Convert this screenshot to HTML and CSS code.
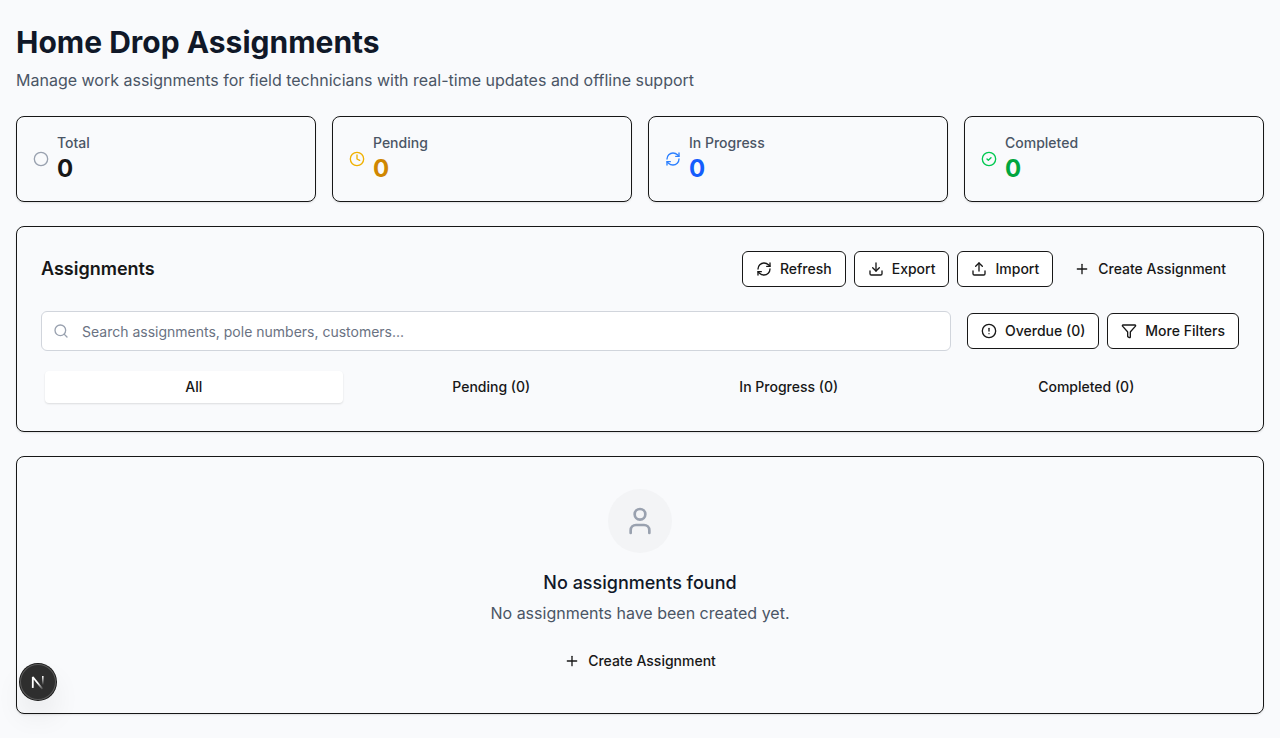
FILE: index.html
```html
<!DOCTYPE html>
<html lang="en">
<head>
<meta charset="utf-8">
<meta name="viewport" content="width=device-width, initial-scale=1">
<title>Home Drop Assignments</title>
<link rel="stylesheet" href="styles.css">
</head>
<body>
<svg class="sprite" aria-hidden="true">
  <symbol id="circle" viewBox="0 0 24 24"><circle cx="12" cy="12" r="10"/></symbol>
  <symbol id="clock" viewBox="0 0 24 24"><circle cx="12" cy="12" r="10"/><path d="M12 6v6l4 2"/></symbol>
  <symbol id="refresh" viewBox="0 0 24 24"><path d="M3 12a9 9 0 0 1 9-9 9.75 9.75 0 0 1 6.74 2.74L21 8"/><path d="M21 3v5h-5"/><path d="M21 12a9 9 0 0 1-9 9 9.75 9.75 0 0 1-6.74-2.74L3 16"/><path d="M8 16H3v5"/></symbol>
  <symbol id="check" viewBox="0 0 24 24"><circle cx="12" cy="12" r="10"/><path d="m9 12 2 2 4-4"/></symbol>
  <symbol id="download" viewBox="0 0 24 24"><path d="M12 15V3"/><path d="M21 15v4a2 2 0 0 1-2 2H5a2 2 0 0 1-2-2v-4"/><path d="m7 10 5 5 5-5"/></symbol>
  <symbol id="upload" viewBox="0 0 24 24"><path d="M12 3v12"/><path d="m17 8-5-5-5 5"/><path d="M21 15v4a2 2 0 0 1-2 2H5a2 2 0 0 1-2-2v-4"/></symbol>
  <symbol id="plus" viewBox="0 0 24 24"><path d="M5 12h14"/><path d="M12 5v14"/></symbol>
  <symbol id="search" viewBox="0 0 24 24"><path d="m21 21-4.34-4.34"/><circle cx="11" cy="11" r="8"/></symbol>
  <symbol id="alert" viewBox="0 0 24 24"><circle cx="12" cy="12" r="10"/><path d="M12 8v4"/><path d="M12 16h.01"/></symbol>
  <symbol id="filter" viewBox="0 0 24 24"><path d="M10 20a1 1 0 0 0 .553.895l2 1A1 1 0 0 0 14 21v-7a2 2 0 0 1 .517-1.341L21.74 4.67A1 1 0 0 0 21 3H3a1 1 0 0 0-.742 1.67l7.225 7.989A2 2 0 0 1 10 14z"/></symbol>
  <symbol id="user" viewBox="0 0 24 24"><path d="M19 21v-2a4 4 0 0 0-4-4H9a4 4 0 0 0-4 4v2"/><circle cx="12" cy="7" r="4"/></symbol>
</svg>
<main class="page">
  <header>
    <h1 class="title">Home Drop Assignments</h1>
    <p class="subtitle">Manage work assignments for field technicians with real-time updates and offline support</p>
  </header>

  <section class="stats" aria-label="Summary">
    <div class="card stat">
      <svg class="icon gray"><use href="#circle"/></svg>
      <div><p class="stat-label">Total</p><p class="stat-value">0</p></div>
    </div>
    <div class="card stat pending">
      <svg class="icon"><use href="#clock"/></svg>
      <div><p class="stat-label">Pending</p><p class="stat-value">0</p></div>
    </div>
    <div class="card stat progress">
      <svg class="icon"><use href="#refresh"/></svg>
      <div><p class="stat-label">In Progress</p><p class="stat-value">0</p></div>
    </div>
    <div class="card stat completed">
      <svg class="icon"><use href="#check"/></svg>
      <div><p class="stat-label">Completed</p><p class="stat-value">0</p></div>
    </div>
  </section>

  <section class="card panel">
    <div class="panel-head">
      <h2 class="panel-title">Assignments</h2>
      <div class="actions">
        <button type="button" class="btn outline"><svg class="icon"><use href="#refresh"/></svg>Refresh</button>
        <button type="button" class="btn outline"><svg class="icon"><use href="#download"/></svg>Export</button>
        <button type="button" class="btn outline"><svg class="icon"><use href="#upload"/></svg>Import</button>
        <button type="button" class="btn"><svg class="icon"><use href="#plus"/></svg>Create Assignment</button>
      </div>
    </div>
    <div class="filters">
      <div class="search">
        <svg class="icon gray search-icon"><use href="#search"/></svg>
        <input class="search-input" type="text" aria-label="Search assignments" placeholder="Search assignments, pole numbers, customers...">
      </div>
      <div class="actions">
        <button type="button" class="btn outline"><svg class="icon"><use href="#alert"/></svg>Overdue (0)</button>
        <button type="button" class="btn outline"><svg class="icon"><use href="#filter"/></svg>More Filters</button>
      </div>
    </div>
    <div class="tabs" role="tablist">
      <button type="button" class="tab active" role="tab" aria-selected="true">All</button>
      <button type="button" class="tab" role="tab" aria-selected="false">Pending (0)</button>
      <button type="button" class="tab" role="tab" aria-selected="false">In Progress (0)</button>
      <button type="button" class="tab" role="tab" aria-selected="false">Completed (0)</button>
    </div>
  </section>

  <section class="card empty">
    <div class="avatar"><svg class="icon gray large"><use href="#user"/></svg></div>
    <h3 class="empty-title">No assignments found</h3>
    <p class="empty-text">No assignments have been created yet.</p>
    <button type="button" class="btn tall"><svg class="icon"><use href="#plus"/></svg>Create Assignment</button>
  </section>
</main>

<button type="button" class="dev-badge" aria-label="Open developer tools">
  <svg width="36" height="36" viewBox="0 0 36 36" fill="none" aria-hidden="true">
    <defs>
      <linearGradient id="fade-diagonal" gradientUnits="userSpaceOnUse" x1="19" y1="18" x2="24" y2="25"><stop stop-color="#fff"/><stop offset="1" stop-color="#fff" stop-opacity="0"/></linearGradient>
      <linearGradient id="fade-stem" gradientUnits="userSpaceOnUse" x1="23" y1="12" x2="23" y2="21"><stop stop-color="#fff"/><stop offset="1" stop-color="#fff" stop-opacity="0"/></linearGradient>
    </defs>
    <path d="M12.8 24V13l9.7 12" stroke="url(#fade-diagonal)" stroke-width="1.8" stroke-linejoin="bevel"/>
    <path d="M22.8 12v9" stroke="url(#fade-stem)" stroke-width="1.6"/>
  </svg>
</button>
</body>
</html>
```

FILE: styles.css
```css
* { box-sizing: border-box; }

body {
  margin: 0;
  background: #f9fafc;
  color: #171717;
  font-family: Inter, "Liberation Sans", sans-serif;
  font-size: 16px;
  line-height: 24px;
}

h1, h2, h3, p { margin: 0; }

button, input { font: inherit; color: inherit; }

.sprite { display: none; }

.page {
  display: flex;
  flex-direction: column;
  gap: 24px;
  padding: 24px 16px;
}

.title {
  color: #101828;
  font-size: 30px;
  font-weight: 700;
  line-height: 36px;
}

.subtitle {
  margin-top: 8px;
  color: #4a5565;
}

.card {
  border: 1px solid #171717;
  border-radius: 8px;
  box-shadow: 0 1px 2px rgba(0, 0, 0, 0.1);
  background: #f9fafc;
}

.icon {
  flex: none;
  width: 16px;
  height: 16px;
  fill: none;
  stroke: currentColor;
  stroke-width: 2;
  stroke-linecap: round;
  stroke-linejoin: round;
}

.icon.gray { color: #99a1af; }
.icon.large { width: 32px; height: 32px; }

.stats {
  display: grid;
  grid-template-columns: repeat(4, 1fr);
  gap: 16px;
}

.stat {
  display: flex;
  align-items: center;
  gap: 8px;
  padding: 16px;
}

.stat-label {
  color: #4a5565;
  font-size: 14px;
  font-weight: 500;
  line-height: 20px;
}

.stat-value {
  font-size: 24px;
  font-weight: 700;
  line-height: 32px;
}

.pending .icon { color: #f0b100; }
.pending .stat-value { color: #d08700; }
.progress .icon { color: #2b7fff; }
.progress .stat-value { color: #155dfc; }
.completed .icon { color: #00c950; }
.completed .stat-value { color: #00a63e; }

.panel { padding: 24px; }

.panel-head {
  display: flex;
  align-items: center;
  justify-content: space-between;
  margin-bottom: 24px;
}

.panel-title {
  font-size: 18px;
  font-weight: 600;
  line-height: 28px;
}

.actions {
  display: flex;
  gap: 8px;
}

.btn {
  display: inline-flex;
  align-items: center;
  justify-content: center;
  gap: 8px;
  height: 36px;
  padding: 0 13px;
  border: 0;
  border-radius: 6px;
  background: transparent;
  font-size: 14px;
  font-weight: 500;
  line-height: 20px;
  white-space: nowrap;
}

.btn.outline {
  border: 1px solid #171717;
  background: #fff;
}

.btn.tall {
  height: 40px;
  margin-top: 16px;
  padding: 0 16px;
}

.filters {
  display: flex;
  align-items: center;
  gap: 16px;
  margin-bottom: 16px;
}

.search {
  position: relative;
  flex: 1;
}

.search-icon {
  position: absolute;
  top: 12px;
  left: 12px;
}

.search-input {
  display: block;
  width: 100%;
  height: 40px;
  padding: 8px 12px 8px 40px;
  border: 1px solid #d1d5dc;
  border-radius: 6px;
  background: #fff;
  font-size: 14px;
  line-height: 20px;
}

.search-input::placeholder { color: #6a7282; opacity: 1; }

.tabs {
  display: grid;
  grid-template-columns: repeat(4, 1fr);
  padding: 4px;
}

.tab {
  height: 32px;
  padding: 0 12px;
  border: 0;
  border-radius: 4px;
  background: transparent;
  font-size: 14px;
  font-weight: 500;
  line-height: 20px;
}

.tab.active {
  background: #fff;
  box-shadow: 0 1px 2px rgba(0, 0, 0, 0.12);
}

.empty {
  display: flex;
  flex-direction: column;
  align-items: center;
  padding: 32px;
  text-align: center;
}

.avatar {
  display: flex;
  align-items: center;
  justify-content: center;
  width: 64px;
  height: 64px;
  margin-bottom: 16px;
  border-radius: 50%;
  background: #f3f4f6;
}

.empty-title {
  margin-bottom: 4px;
  color: #101828;
  font-size: 18px;
  font-weight: 500;
  line-height: 28px;
}

.empty-text { color: #4a5565; }

.dev-badge {
  position: fixed;
  bottom: 38px;
  left: 20px;
  width: 36px;
  height: 36px;
  padding: 0;
  border: 0;
  border-radius: 50%;
  background: #2e2e2e;
  box-shadow: 0 0 0 1px #171717, inset 0 0 0 1px #5a5a5a, 0 16px 32px -8px rgba(0, 0, 0, 0.24);
}

.dev-badge svg { display: block; }
```
